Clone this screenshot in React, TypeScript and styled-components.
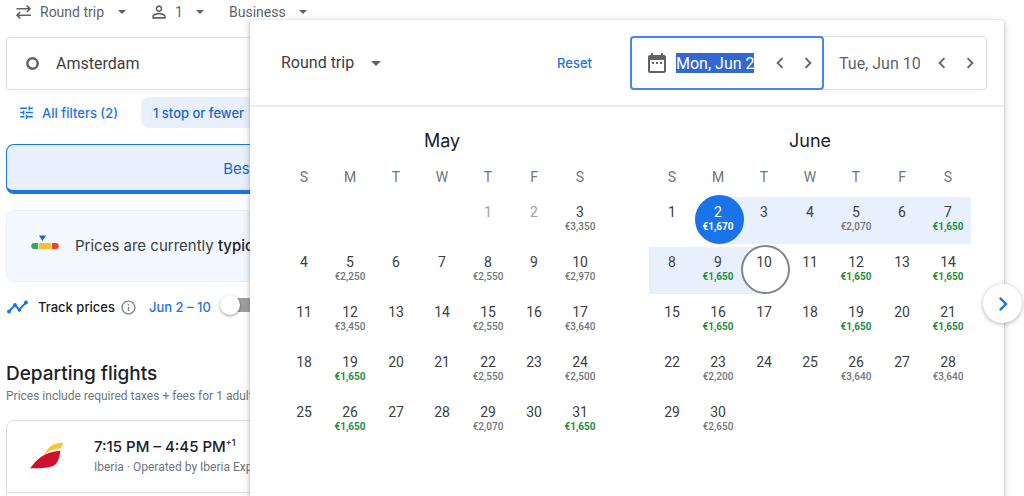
import React from "react";
import styled, { createGlobalStyle, css } from "styled-components";

const GlobalStyle = createGlobalStyle`
  *, *::before, *::after { box-sizing: border-box; }
  html, body { margin: 0; padding: 0; background: #fff; overflow: hidden; }
  body { font-family: Roboto, "Liberation Sans", sans-serif; font-size: 14px; color: #202124; }
  button, input, select { font: inherit; color: inherit; margin: 0; }
  button { border: 0; padding: 0; background: none; cursor: pointer; }
  svg { display: block; flex: none; }
`;

const display = css`
  font-family: Inter, Roboto, sans-serif;
`;

const Page = styled.div`
  position: relative;
  height: 100vh;
  overflow: hidden;
`;

const Results = styled.main`
  display: flex;
  flex-direction: column;
  padding: 0 86px 0 6px;
  white-space: nowrap;
`;

const TripBar = styled.div`
  display: flex;
  align-items: center;
  height: 24px;
  padding-left: 9px;
  color: #5f6368;
`;

const TripIcon = styled.span<{ $before?: number }>`
  margin-left: ${(p) => p.$before ?? 0}px;
`;

const SelectWrap = styled.span<{ $gap: number }>`
  display: inline-grid;
  align-items: center;
  margin-left: ${(p) => p.$gap}px;
  > * { grid-area: 1 / 1; }
  > svg { justify-self: end; pointer-events: none; }
`;

const Select = styled.select<{ $big?: boolean }>`
  appearance: none;
  border: 0;
  padding: 0 ${(p) => (p.$big ? 26 : 21)}px 0 0;
  background: none;
  outline: none;
  font-size: ${(p) => (p.$big ? 16 : 14)}px;
  line-height: 24px;
  color: ${(p) => (p.$big ? "#3c4043" : "#5f6368")};
`;

const SearchBox = styled.label`
  display: flex;
  align-items: center;
  gap: 17px;
  height: 53px;
  margin-top: 13px;
  padding-left: 19px;
  border: 1px solid #dadce0;
  border-radius: 4px;
`;

const OriginInput = styled.input`
  flex: 1;
  border: 0;
  padding: 0;
  outline: none;
  background: none;
  font-size: 16px;
  line-height: 24px;
  color: #3c4043;
`;

const Filters = styled.div`
  display: flex;
  align-items: center;
  gap: 23px;
  margin-top: 7px;
  padding-left: 12px;
`;

const AllFilters = styled.button`
  ${display}
  display: flex;
  align-items: center;
  gap: 7px;
  color: #1a73e8;
  font-size: 13px;
  font-weight: 500;
`;

const Chip = styled.button`
  ${display}
  height: 31px;
  padding: 0 12px;
  border-radius: 8px;
  background: #e8f0fe;
  color: #1967d2;
  font-size: 13px;
  font-weight: 500;
`;

const SortTab = styled.button`
  ${display}
  width: 50%;
  height: 50px;
  margin-top: 16px;
  padding-top: 2px;
  border: 1px solid #1a73e8;
  border-bottom-width: 4px;
  border-radius: 8px 0 0 8px;
  background: #e8f0fe;
  color: #1967d2;
  font-size: 15px;
`;

const Insight = styled.section`
  ${display}
  display: flex;
  align-items: center;
  gap: 16px;
  height: 72px;
  margin-top: 16px;
  padding: 0 0 2px 24px;
  border: 1px solid #e8f0fe;
  border-radius: 8px;
  background: #f3f7fe;
  font-size: 15px;
  color: #3c4043;
  b { font-weight: 500; color: #202124; }
`;

const TrackRow = styled.label`
  ${display}
  display: flex;
  align-items: center;
  height: 24px;
  margin-top: 13px;
  font-size: 13px;
  font-weight: 500;
`;

const TrackName = styled.span`
  margin: 0 5px 0 9px;
`;

const InfoMark = styled.span`
  color: #80868b;
`;

const TrackDates = styled.span`
  margin: 0 11px 0 12px;
  color: #1a73e8;
`;

const Toggle = styled.input`
  appearance: none;
  position: relative;
  width: 36px;
  height: 14px;
  border-radius: 7px;
  background: #9e9e9e;
  && { margin: 0 0 4px; }
  &::before {
    content: "";
    position: absolute;
    top: -3px;
    left: -2px;
    width: 20px;
    height: 20px;
    border-radius: 50%;
    background: #fff;
    box-shadow: 0 1px 3px rgba(0, 0, 0, 0.4);
  }
`;

const Heading = styled.h2`
  ${display}
  margin: 42px 0 0;
  font-size: 19px;
  font-weight: 500;
  line-height: 26px;
`;

const Note = styled.p`
  margin: 0;
  font-size: 12px;
  line-height: 18px;
  color: #70757a;
`;

const FlightCard = styled.article`
  display: flex;
  align-items: center;
  gap: 30px;
  height: 73px;
  margin-top: 15px;
  padding-left: 23px;
  border: 1px solid #dadce0;
  border-radius: 8px 8px 0 0;
`;

const FlightTime = styled.div`
  ${display}
  font-size: 15px;
  font-weight: 500;
  line-height: 20px;
  sup { font-size: 9px; line-height: 0; }
`;

const FlightInfo = styled.div`
  font-size: 12px;
  line-height: 20px;
  color: #70757a;
`;

const NextCard = styled.div`
  height: 40px;
  border: 1px solid #dadce0;
  border-top: 0;
`;

const Dialog = styled.section`
  position: absolute;
  top: 20px;
  right: 20px;
  bottom: -20px;
  left: 250px;
  border-radius: 4px;
  background: #fff;
  box-shadow: 0 1px 3px rgba(60, 64, 67, 0.3), 0 2px 6px 2px rgba(60, 64, 67, 0.15);
`;

const DialogHeader = styled.header`
  display: flex;
  align-items: center;
  height: 87px;
  padding: 1px 17px 0 31px;
  border-bottom: 2px solid #eceded;
`;

const Reset = styled.button`
  ${display}
  margin: 0 38px 0 auto;
  color: #1a73e8;
  font-size: 13px;
  font-weight: 500;
`;

const Dates = styled.div`
  display: flex;
  height: 54px;
  border: 1px solid #dadce0;
  border-radius: 4px;
`;

const DateField = styled.div<{ $active?: boolean }>`
  display: flex;
  align-items: center;
  padding: 0 2px 0 15px;
  color: #5f6368;
  ${(p) =>
    p.$active &&
    css`
      margin: -1px 0 -1px -1px;
      padding: 0 0 0 13px;
      border: 2px solid #4285f4;
      border-radius: 4px;
    `}
`;

const DateInput = styled.input<{ $selected?: boolean }>`
  width: ${(p) => (p.$selected ? 78 : 81)}px;
  height: 20px;
  padding: 0;
  border: 0;
  outline: none;
  font-size: 16px;
  background: ${(p) => (p.$selected ? "#3367d1" : "none")};
  color: ${(p) => (p.$selected ? "#fff" : "#5f6368")};
  && { margin: ${(p) => (p.$selected ? "0 12px 0 7px" : "0 8px 0 0")}; }
`;

const StepButton = styled.button`
  display: grid;
  place-items: center;
  width: 28px;
  height: 28px;
  color: #5f6368;
`;

const Months = styled.div`
  display: grid;
  grid-template-columns: 1fr 1fr;
  gap: 46px;
  padding: 21px 33px 0 31px;
`;

const MonthTable = styled.table`
  width: 100%;
  table-layout: fixed;
  border-collapse: collapse;
  caption {
    ${display}
    font-size: 18px;
    line-height: 26px;
  }
  th {
    height: 43px;
    padding: 2px 0 0;
    font-weight: 400;
    color: #70757a;
  }
  td {
    height: 50px;
    padding: 0 0 3px;
  }
`;

type Mark = "start" | "range" | "end";

const Day = styled.button<{ $mark?: Mark; $past?: boolean }>`
  position: relative;
  z-index: ${(p) => (p.$mark === "start" || p.$mark === "end" ? 1 : 0)};
  display: flex;
  flex-direction: column;
  align-items: center;
  width: 100%;
  height: 47px;
  padding-top: 6px;
  line-height: 18px;
  color: ${(p) => (p.$mark === "start" ? "#fff" : p.$past ? "#9aa0a6" : "#3c4043")};
  background: ${(p) =>
    p.$mark === "range"
      ? "#e8f0fe"
      : p.$mark === "start"
        ? "linear-gradient(to right, #fff 50%, #e8f0fe 50%)"
        : p.$mark === "end"
          ? "linear-gradient(to right, #e8f0fe 50%, #fff 50%)"
          : "none"};
  ${(p) =>
    (p.$mark === "start" || p.$mark === "end") &&
    css`
      &::before {
        content: "";
        position: absolute;
        z-index: -1;
        top: -2px;
        left: calc(50% - 23px);
        width: 49px;
        height: 49px;
        border-radius: 50%;
        background: ${p.$mark === "start" ? "#1a73e8" : "#fff"};
        border: 2px solid ${p.$mark === "start" ? "#1a73e8" : "#80868b"};
      }
    `}
`;

const Price = styled.span<{ $tone: "low" | "normal" | "inverse" }>`
  font-size: 10px;
  font-weight: ${(p) => (p.$tone === "normal" ? 500 : 700)};
  line-height: 11px;
  color: ${(p) => (p.$tone === "low" ? "#1e8e3e" : p.$tone === "inverse" ? "#fff" : "#70757a")};
`;

const NextMonth = styled.button`
  position: absolute;
  top: 264px;
  right: -18px;
  display: grid;
  place-items: center;
  width: 39px;
  height: 39px;
  border-radius: 50%;
  background: #fff;
  color: #1a73e8;
  box-shadow: 0 1px 4px rgba(60, 64, 67, 0.4);
`;

const Icon = ({ d, size = 24 }: { d: string; size?: number }) => (
  <svg width={size} height={size} viewBox="0 0 24 24" fill="currentColor" aria-hidden="true">
    <path d={d} />
  </svg>
);

const LEFT = "M15.41 7.41L14 6l-6 6 6 6 1.41-1.41L10.83 12z";
const RIGHT = "M10 6L8.59 7.41 13.17 12l-4.58 4.59L10 18l6-6z";
const TUNE =
  "M3 17v2h6v-2H3zM3 5v2h10V5H3zm10 16v-2h8v-2h-8v-2h-2v6h2zM7 9v2H3v2h4v2h2V9H7zm14 4v-2H11v2h10zm-6-4h2V7h4V5h-4V3h-2v6z";
const PERSON =
  "M12 5.9c1.16 0 2.1.94 2.1 2.1s-.94 2.1-2.1 2.1S9.9 9.16 9.9 8s.94-2.1 2.1-2.1m0 9c2.97 0 6.1 1.46 6.1 2.1v1.1H5.9V17c0-.64 3.13-2.1 6.1-2.1M12 4C9.79 4 8 5.79 8 8s1.79 4 4 4 4-1.79 4-4-1.79-4-4-4zm0 9c-2.67 0-8 1.34-8 4v3h16v-3c0-2.66-5.33-4-8-4z";
const CALENDAR =
  "M9 11H7v2h2v-2zm4 0h-2v2h2v-2zm4 0h-2v2h2v-2zm2-7h-1V2h-2v2H8V2H6v2H5c-1.11 0-1.99.9-1.99 2L3 20c0 1.1.89 2 2 2h14c1.1 0 2-.9 2-2V6c0-1.1-.9-2-2-2zm0 16H5V9h14v11z";
const INFO =
  "M11 7h2v2h-2zm0 4h2v6h-2zm1-9C6.48 2 2 6.48 2 12s4.48 10 10 10 10-4.48 10-10S17.52 2 12 2zm0 18c-4.41 0-8-3.59-8-8s3.59-8 8-8 8 3.59 8 8-3.59 8-8 8z";

const SwapIcon = () => (
  <svg width="17" height="14" viewBox="0 0 17 14" fill="none" stroke="#5f6368" strokeWidth="1.6" aria-hidden="true">
    <path d="M1.5 3.8H15M11.8.6l3.2 3.2L11.8 7M16 10.2H2M5.2 7L2 10.2l3.2 3.2" />
  </svg>
);

const Caret = ({ width }: { width: number }) => (
  <svg width={width} height={width / 2} viewBox="0 0 10 5" fill="#5f6368" aria-hidden="true">
    <path d="M0 0h10L5 5z" />
  </svg>
);

const TrendIcon = () => (
  <svg width="23" height="14" viewBox="0 0 23 14" aria-hidden="true">
    <path d="M3 11.4L9 5.2l4.2 4.4L20 2.6" fill="none" stroke="#1a73e8" strokeWidth="2" />
    <g fill="#1a73e8">
      <circle cx="3" cy="11.4" r="2" />
      <circle cx="9" cy="5" r="1.9" />
      <circle cx="13.3" cy="9.8" r="1.9" />
      <circle cx="20" cy="2.6" r="2" />
    </g>
  </svg>
);

const GaugeIcon = () => (
  <svg width="28" height="20" viewBox="0 0 28 20" aria-hidden="true">
    <path d="M8 .5h7L11.5 6z" fill="#1967d2" />
    <path d="M3.2 8H7v6H3.2a3 3 0 0 1 0-6z" fill="#34a853" />
    <path d="M8 8h12v6H8z" fill="#fbc02d" />
    <path d="M21 8h3.800a3 3 0 0 1 0 6H21z" fill="#ea4335" />
  </svg>
);

const IberiaLogo = () => (
  <svg width="34" height="30" viewBox="0 0 34 30" aria-hidden="true">
    <path d="M0 26.5C6 18 14 9.5 30.500 8.700 29.500 14 29 20 24 23.500 18 26.700 8 26 0 26.500z" fill="#d0112b" />
    <path d="M13.500 13C18 5 23.500.8 33.300.8 32.500 3 31.500 5.200 30.300 6.500 24 6.500 18.500 8.800 13.500 13z" fill="#fcc42c" />
  </svg>
);

interface MonthData {
  name: string;
  offset: number;
  days: number;
  prices: Record<number, string>;
}

const MAY: MonthData = {
  name: "May",
  offset: 4,
  days: 31,
  prices: {
    3: "€3,350", 5: "€2,250", 8: "€2,550", 10: "€2,970", 12: "€3,450", 15: "€2,550", 17: "€3,640",
    19: "€1,650", 22: "€2,550", 24: "€2,500", 26: "€1,650", 29: "€2,070", 31: "€1,650",
  },
};

const JUNE: MonthData = {
  name: "June",
  offset: 0,
  days: 30,
  prices: {
    2: "€1,670", 5: "€2,070", 7: "€1,650", 9: "€1,650", 12: "€1,650", 14: "€1,650", 16: "€1,650",
    19: "€1,650", 21: "€1,650", 23: "€2,200", 26: "€3,640", 28: "€3,640", 30: "€2,650",
  },
};

const markOf = (month: string, day: number): Mark | undefined => {
  if (month !== "June") return undefined;
  if (day === 2) return "start";
  if (day === 10) return "end";
  return day > 2 && day < 10 ? "range" : undefined;
};

const Month = ({ data }: { data: MonthData }) => (
  <MonthTable>
    <caption>{data.name}</caption>
    <thead>
      <tr>
        {["S", "M", "T", "W", "T", "F", "S"].map((d, i) => (
          <th key={i} scope="col">{d}</th>
        ))}
      </tr>
    </thead>
    <tbody>
      {[0, 1, 2, 3, 4].map((week) => (
        <tr key={week}>
          {[0, 1, 2, 3, 4, 5, 6].map((col) => {
            const day = week * 7 + col - data.offset + 1;
            if (day < 1 || day > data.days) return <td key={col} />;
            const price = data.prices[day];
            const mark = markOf(data.name, day);
            const tone = mark === "start" ? "inverse" : price === "€1,650" ? "low" : "normal";
            return (
              <td key={col}>
                <Day type="button" $mark={mark} $past={data.name === "May" && day < 3}>
                  <span>{day}</span>
                  {price && <Price $tone={tone}>{price}</Price>}
                </Day>
              </td>
            );
          })}
        </tr>
      ))}
    </tbody>
  </MonthTable>
);

const Stepper = ({ label }: { label: string }) => (
  <>
    <StepButton type="button" aria-label={`Earlier ${label}`}><Icon d={LEFT} size={22} /></StepButton>
    <StepButton type="button" aria-label={`Later ${label}`}><Icon d={RIGHT} size={22} /></StepButton>
  </>
);

export default function App() {
  return (
    <>
      <GlobalStyle />
      <Page>
        <Results>
          <TripBar>
            <TripIcon><SwapIcon /></TripIcon>
            <SelectWrap $gap={8}>
              <Select aria-label="Trip type"><option>Round trip</option></Select>
              <Caret width={8} />
            </SelectWrap>
            <TripIcon $before={23}><Icon d={PERSON} size={20} /></TripIcon>
            <SelectWrap $gap={6}>
              <Select aria-label="Passengers"><option>1</option></Select>
              <Caret width={8} />
            </SelectWrap>
            <SelectWrap $gap={25}>
              <Select aria-label="Cabin class"><option>Business</option></Select>
              <Caret width={8} />
            </SelectWrap>
          </TripBar>
          <SearchBox>
            <svg width="13" height="13" viewBox="0 0 13 13" aria-hidden="true">
              <circle cx="6.5" cy="6.5" r="5.2" fill="none" stroke="#5f6368" strokeWidth="2.5" />
            </svg>
            <OriginInput aria-label="Where from" defaultValue="Amsterdam" />
          </SearchBox>
          <Filters>
            <AllFilters type="button"><Icon d={TUNE} size={17} />All filters (2)</AllFilters>
            <Chip type="button">1 stop or fewer</Chip>
          </Filters>
          <SortTab type="button">Best</SortTab>
          <Insight>
            <GaugeIcon />
            <span>Prices are currently <b>typical</b></span>
          </Insight>
          <TrackRow>
            <TrendIcon />
            <TrackName>Track prices</TrackName>
            <InfoMark><Icon d={INFO} size={17} /></InfoMark>
            <TrackDates>Jun 2 – 10</TrackDates>
            <Toggle type="checkbox" />
          </TrackRow>
          <Heading>Departing flights</Heading>
          <Note>Prices include required taxes + fees for 1 adult.</Note>
          <FlightCard>
            <IberiaLogo />
            <div>
              <FlightTime>7:15 PM – 4:45 PM<sup>+1</sup></FlightTime>
              <FlightInfo>Iberia · Operated by Iberia Express</FlightInfo>
            </div>
          </FlightCard>
          <NextCard />
        </Results>

        <Dialog role="dialog" aria-label="Travel dates">
          <DialogHeader>
            <SelectWrap $gap={0}>
              <Select $big aria-label="Ticket type"><option>Round trip</option></Select>
              <Caret width={10} />
            </SelectWrap>
            <Reset type="button">Reset</Reset>
            <Dates>
              <DateField $active>
                <Icon d={CALENDAR} size={24} />
                <DateInput $selected aria-label="Departure" defaultValue="Mon, Jun 2" />
                <Stepper label="departure" />
              </DateField>
              <DateField>
                <DateInput aria-label="Return" defaultValue="Tue, Jun 10" />
                <Stepper label="return" />
              </DateField>
            </Dates>
          </DialogHeader>
          <Months>
            <Month data={MAY} />
            <Month data={JUNE} />
          </Months>
          <NextMonth type="button" aria-label="Next month"><Icon d={RIGHT} size={28} /></NextMonth>
        </Dialog>
      </Page>
    </>
  );
}
